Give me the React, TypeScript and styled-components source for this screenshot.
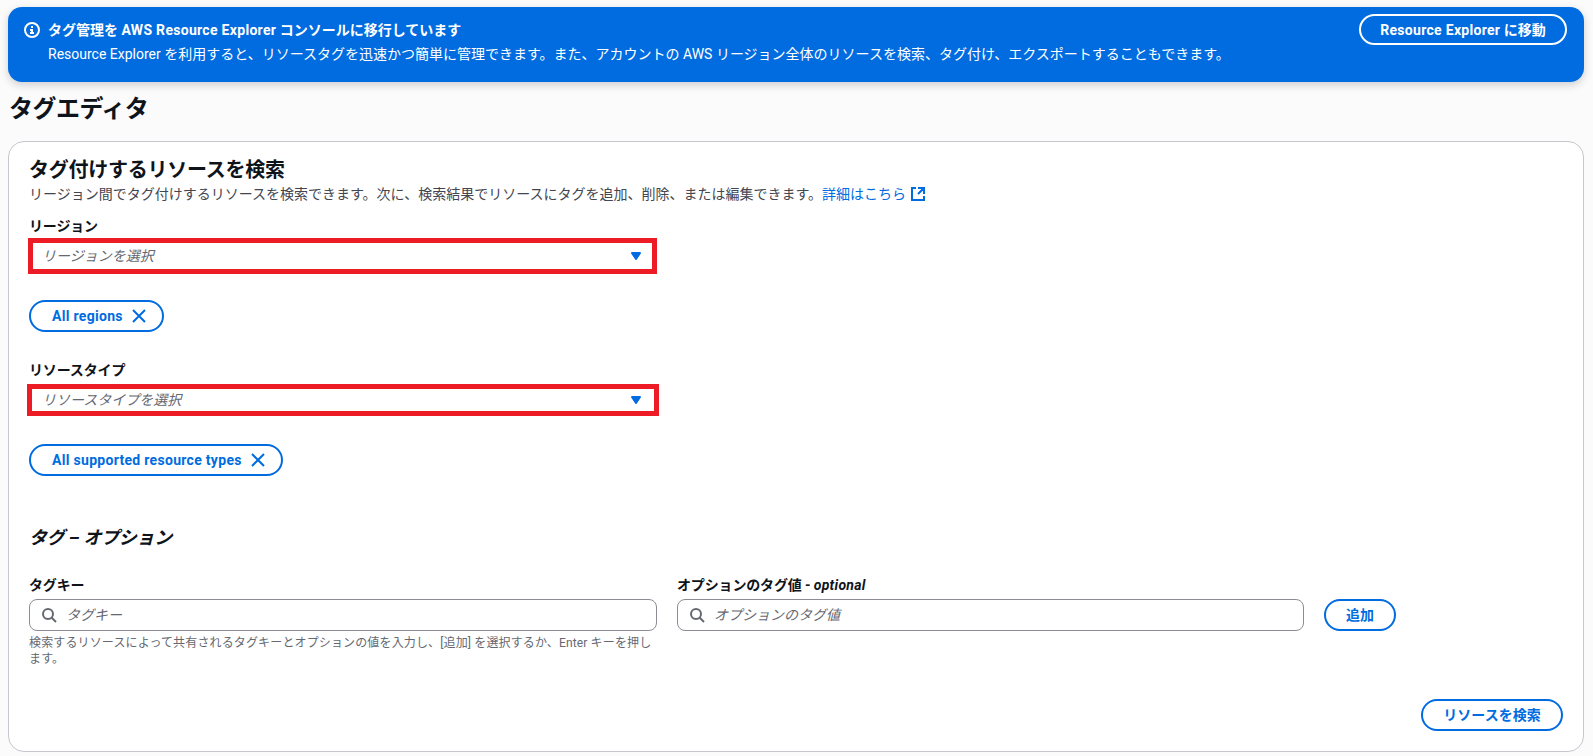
import React from "react";
import styled, { createGlobalStyle } from "styled-components";

const Global = createGlobalStyle`
  html, body { margin: 0; padding: 0; background: #fbfbfb; }
  body { font-family: "Roboto", "Noto Sans CJK JP", sans-serif; color: #0f141a; font-size: 14px; line-height: 20px; }
  * { box-sizing: border-box; }
`;
const Page = styled.div`
  width: 1593px; height: 756px; overflow: hidden; padding: 7px 9px 0 8px;
`;
const Banner = styled.div`
  height: 75px; background: #006ce0; border-radius: 14px; color: #fff;
  box-shadow: 0 3px 8px rgba(0,7,22,.18);
  display: flex; justify-content: space-between; padding: 7px 17px 0 16px;
`;
const BannerBody = styled.div`display: flex; gap: 8px; padding-top: 6px;`;
const InfoIcon = styled.svg`
  width: 16px; height: 16px; fill: none; stroke: #fff; stroke-width: 2; margin-top: 2px; flex: none;
`;
const BannerTitle = styled.div`font-weight: 700; line-height: 20px;`;
const Latin = styled.span`letter-spacing: .3px;`;
const BannerText = styled.div`line-height: 20px; margin-top: 4px;`;
const BannerButton = styled.button`
  width: 208px; height: 31px; border: 2px solid #fff; border-radius: 16px; background: transparent;
  color: #fff; font: 700 14px/20px "Roboto", "Noto Sans CJK JP", sans-serif; padding: 0;
`;
const PageTitle = styled.h1`
  margin: 12px 0 0 1px; font-size: 24px; line-height: 30px; font-weight: 700; height: 47px; color: #0f141a; letter-spacing: -.5px;
`;
const Card = styled.section`
  height: 611px; background: #fff; border: 1px solid #c6c6cd; border-radius: 16px; padding: 15px 20px 0 20px;
  display: flex; flex-direction: column;
`;
const CardTitle = styled.h2`margin: 0; font-size: 20px; line-height: 26px; font-weight: 700; letter-spacing: -.25px;`;
const Description = styled.p`margin: 1px 0 0; color: #424650; line-height: 20px; font-size: 14px;`;
const Link = styled.a`color: #006ce0; text-decoration: none; display: inline-flex; align-items: center; gap: 4px;`;
const ExtIcon = styled.svg`width: 16px; height: 16px; fill: none; stroke: #006ce0; stroke-width: 2;`;
const Label = styled.label<{ $top: number }>`
  display: block; font-weight: 700; font-size: 14px; line-height: 20px; margin-top: ${p => p.$top}px; color: #0f141a; letter-spacing: -.15px;
`;
const RedSelect = styled.div<{ $left: number; $right: number; $top: number; $h: number }>`
  margin: ${p => p.$top}px ${p => -p.$right}px 0 ${p => -p.$left}px;
  height: ${p => p.$h}px; border: 5px solid #ed1c24; background: #fff;
  display: flex; align-items: center; justify-content: space-between;
  padding: 0 ${p => 8 + p.$right}px 0 ${p => 8 + p.$left}px;
`;
const FieldBox = styled.div`width: 628px; display: flex; flex-direction: column;`;
const Placeholder = styled.span`font-style: italic; color: #656871; font-size: 14px;`;
const Caret = styled.svg`width: 16px; height: 16px; fill: #006ce0; stroke: #006ce0; stroke-width: 2; stroke-linejoin: round;`;
const Pill = styled.div<{ $top: number }>`
  display: inline-flex; align-self: flex-start; align-items: center; gap: 8px; height: 32px; margin-top: ${p => p.$top}px;
  border: 2px solid #006ce0; border-radius: 16px; padding: 0 15px 0 21px; color: #006ce0; font-weight: 700; background: #fff; letter-spacing: .3px;
`;
const CloseIcon = styled.svg`width: 16px; height: 16px; fill: none; stroke: #006ce0; stroke-width: 2;`;
const SectionTitle = styled.h3`margin: 50px 0 0; font-size: 18px; line-height: 24px; font-weight: 700; font-style: italic; letter-spacing: -.3px;`;
const TagRow = styled.div`display: flex; margin-top: 25px; align-items: flex-start;`;
const TagColumn = styled.div<{ $w: number }>`width: ${p => p.$w}px; margin-right: 20px; flex: none;`;
const SearchInput = styled.div`
  height: 32px; border: 1px solid #8c8c94; border-radius: 8px; margin-top: 4px; background: #fff;
  display: flex; align-items: center; gap: 9px; padding: 0 10px 0 11px;
`;
const SearchIcon = styled.svg`width: 16px; height: 16px; fill: none; stroke: #656871; stroke-width: 2; flex: none;`;
const InputPlaceholder = styled.span`font-style: italic; color: #656871;`;
const Help = styled.div`font-size: 12px; line-height: 16px; color: #656871; margin-top: 4px; letter-spacing: .14px;`;
const Optional = styled.em`font-weight: 700; letter-spacing: .3px;`;
const OutlineButton = styled.button<{ $w: number }>`
  width: ${p => p.$w}px; height: 32px; flex: none; border: 2px solid #006ce0; border-radius: 16px; background: #fff;
  color: #006ce0; font: 700 14px/20px "Roboto", "Noto Sans CJK JP", sans-serif; padding: 0;
`;
const AddSlot = styled.div`margin-top: 24px;`;
const Footer = styled.div`display: flex; justify-content: flex-end; margin-top: 32px;`;

const Close = () => <CloseIcon viewBox="0 0 16 16"><path d="m2 2 12 12M14 2 2 14" /></CloseIcon>;
const Search = () => (
  <SearchIcon viewBox="0 0 16 16"><circle cx="7" cy="7" r="5" /><path d="m15 15-4.5-4.5" /></SearchIcon>
);
const Down = () => <Caret viewBox="0 0 16 16"><path d="M4 5h8l-4 6-4-6z" /></Caret>;

export default function App() {
  return (
    <Page>
      <Global />
      <Banner>
        <BannerBody>
          <InfoIcon viewBox="0 0 16 16">
            <circle cx="8" cy="8" r="7" />
            <path d="M8 11V8H6" /><path d="M10 11H6" /><path d="M7.99 5H8v.01h-.01z" />
          </InfoIcon>
          <div>
            <BannerTitle>タグ管理を <Latin>AWS Resource Explorer</Latin> コンソールに移行しています</BannerTitle>
            <BannerText>Resource Explorer を利用すると、リソースタグを迅速かつ簡単に管理できます。また、アカウントの AWS リージョン全体のリソースを検索、タグ付け、エクスポートすることもできます。</BannerText>
          </div>
        </BannerBody>
        <BannerButton><Latin>Resource Explorer</Latin> に移動</BannerButton>
      </Banner>
      <PageTitle>タグエディタ</PageTitle>
      <Card>
        <CardTitle>タグ付けするリソースを検索</CardTitle>
        <Description>
          リージョン間でタグ付けするリソースを検索できます。次に、検索結果でリソースにタグを追加、削除、または編集できます。<Link>詳細はこちら<ExtIcon viewBox="0 0 16 16"><path d="M14 8.01v-6H8M14.02 2 8 8.01M6 2.01H2v12h12v-3.99" /></ExtIcon></Link>
        </Description>
        <FieldBox>
          <Label $top={12}>リージョン</Label>
          <RedSelect $left={1} $right={0} $top={2} $h={36}>
            <Placeholder>リージョンを選択</Placeholder><Down />
          </RedSelect>
        </FieldBox>
        <Pill $top={26}>All regions <Close /></Pill>
        <FieldBox>
          <Label $top={28}>リソースタイプ</Label>
          <RedSelect $left={2} $right={2} $top={4} $h={32}>
            <Placeholder>リソースタイプを選択</Placeholder><Down />
          </RedSelect>
        </FieldBox>
        <Pill $top={28}>All supported resource types <Close /></Pill>
        <SectionTitle>タグ – オプション</SectionTitle>
        <TagRow>
          <TagColumn $w={628}>
            <Label $top={0}>タグキー</Label>
            <SearchInput><Search /><InputPlaceholder>タグキー</InputPlaceholder></SearchInput>
            <Help>検索するリソースによって共有されるタグキーとオプションの値を入力し、[追加] を選択するか、Enter キーを押します。</Help>
          </TagColumn>
          <TagColumn $w={627}>
            <Label $top={0}>オプションのタグ値 - <Optional>optional</Optional></Label>
            <SearchInput><Search /><InputPlaceholder>オプションのタグ値</InputPlaceholder></SearchInput>
          </TagColumn>
          <AddSlot><OutlineButton $w={72}>追加</OutlineButton></AddSlot>
        </TagRow>
        <Footer><OutlineButton $w={142}>リソースを検索</OutlineButton></Footer>
      </Card>
    </Page>
  );
}
